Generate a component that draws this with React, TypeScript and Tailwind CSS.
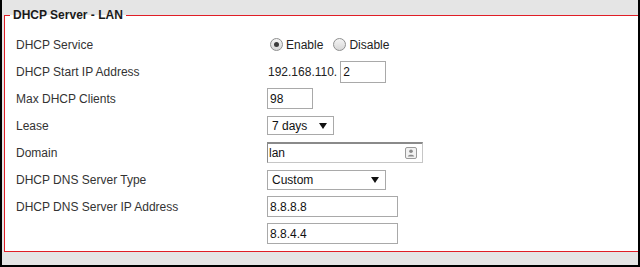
import React from "react";

const Radio = ({ checked }: { checked?: boolean }) => (
  <span className="ml-[3px] mr-[3px] inline-flex h-[13px] w-[13px] shrink-0 items-center justify-center rounded-full border border-[#8e8f8f] bg-gradient-to-b from-[#f4f4f4] to-[#d8d8d8]">
    {checked && <span className="h-[5px] w-[5px] rounded-full bg-[#3b3b3b]" />}
  </span>
);

const Arrow = () => (
  <svg width="8" height="6" viewBox="0 0 8 6" className="shrink-0">
    <polygon points="0,0 8,0 4,6" fill="#111" />
  </svg>
);

const Row = ({ label, children }: { label?: string; children?: React.ReactNode }) => (
  <div className="flex h-[27px] items-center">
    <div className="w-[251px] shrink-0 text-[12px] text-[#333]">{label}</div>
    <div className="flex items-center text-[12px] text-[#222]">{children}</div>
  </div>
);

const Box = ({ w, value }: { w: string; value: string }) => (
  <div className={`flex h-[21px] ${w} items-center border border-[#a9a9a9] bg-white pl-[2px] text-[12px] text-[#111]`}>
    {value}
  </div>
);

export default function App() {
  return (
    <div className="h-[267px] w-[640px] overflow-hidden border-b-2 border-l-2 border-r-2 border-black bg-[#e5e5e5] font-['Liberation_Sans',Arial,sans-serif]">
      <fieldset className="mt-[8px] ml-[2px] mr-[-2px] border border-r-0 border-[#e01e26] bg-white px-0 pb-[4px] pt-[9px]">
        <legend className="ml-[5px] px-[3px] text-[12px] font-bold leading-[14px] text-[#1a1a1a]">
          DHCP Server - LAN
        </legend>
        <div className="pl-[11px]">
          <Row label="DHCP Service">
            <Radio checked />
            <span className="mr-[7px]">Enable</span>
            <Radio />
            <span>Disable</span>
          </Row>
          <Row label="DHCP Start IP Address">
            <span className="ml-[1px] mr-[3px]">192.168.110.</span>
            <div className="flex h-[22px] w-[46px] items-center border border-[#a9a9a9] bg-white pl-[2px] text-[12px] text-[#111]">2</div>
          </Row>
          <Row label="Max DHCP Clients">
            <Box w="w-[46px]" value="98" />
          </Row>
          <Row label="Lease">
            <div className="flex h-[19px] w-[67px] items-center justify-between border border-[#a9a9a9] bg-white pl-[4px] pr-[6px] text-[12px] text-[#111]">
              <span>7 days</span>
              <Arrow />
            </div>
          </Row>
          <Row label="Domain">
            <div className="flex h-[21px] w-[156px] items-center justify-between border border-[#c6c6c6] border-l-[#8a8a8a] border-t-2 border-t-[#8a8a8a] bg-white pl-[1px] pr-[5px] text-[12px] text-[#111]">
              <span>lan</span>
              <svg width="12" height="12" viewBox="0 0 12 12">
                <rect x="0.5" y="0.5" width="11" height="11" rx="1.5" fill="#f2f2f2" stroke="#9a9a9a" />
                <circle cx="6" cy="4.3" r="1.8" fill="#8a8a8a" />
                <path d="M2.8 9.5 C3 7.2 9 7.2 9.2 9.5 Z" fill="#8a8a8a" />
              </svg>
            </div>
          </Row>
          <Row label="DHCP DNS Server Type">
            <div className="flex h-[20px] w-[119px] items-center justify-between border border-[#a9a9a9] bg-white pl-[4px] pr-[6px] text-[12px] text-[#111]">
              <span>Custom</span>
              <Arrow />
            </div>
          </Row>
          <Row label="DHCP DNS Server IP Address">
            <Box w="w-[131px]" value="8.8.8.8" />
          </Row>
          <Row>
            <Box w="w-[131px]" value="8.8.4.4" />
          </Row>
        </div>
      </fieldset>
    </div>
  );
}
